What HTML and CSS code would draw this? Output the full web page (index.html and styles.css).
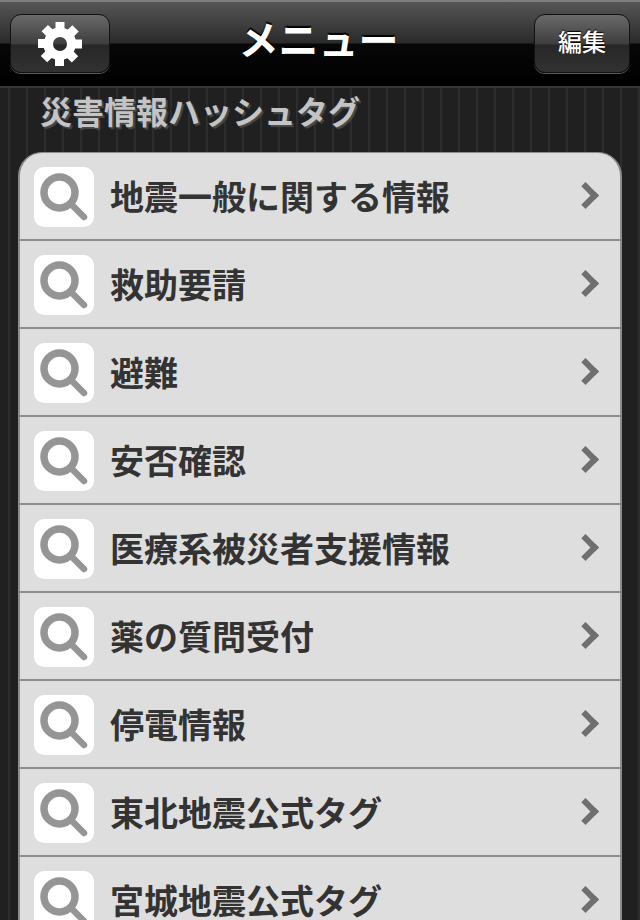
FILE: index.html
```html
<!DOCTYPE html>
<html lang="ja">

<head>
  <meta charset="utf-8">
  <title>メニュー</title>
  <link rel="stylesheet" href="styles.css">
</head>

<body>
  <header class="navbar">
    <button type="button" class="navBtn gearBtn">
      <svg width="46" height="46" viewBox="0 0 46 46">
        <path class="gear" fill-rule="evenodd" d="M18.500 1h9v6.200l3.400 1.400 4.400-4.400 6.400 6.400-4.400 4.400 1.400 3.400H45v9h-6.800l-1.400 3.400 4.400 4.400-6.400 6.400-4.400-4.400-3.400 1.400V45h-9v-6.700l-3.400-1.400-4.400 4.400-6.400-6.400 4.400-4.400-1.400-3.400H1v-9h6.600l1.400-3.400-4.400-4.400 6.400-6.400 4.400 4.400 3.100-1.400z M23 16a7 7 0 1 0 0 14a7 7 0 1 0 0-14z"/>
      </svg>
    </button>
    <h1 class="navTitle">メニュー</h1>
    <button type="button" class="navBtn editBtn"><span class="editLabel">編集</span></button>
  </header>

  <main class="content">
    <h2 class="sectionTitle">災害情報ハッシュタグ</h2>
    <ul class="menuList">
      <li class="menuRow"><span class="searchBox"><svg width="60" height="60" viewBox="0 0 60 60"><use href="#lens"/></svg></span><span class="rowText">地震一般に関する情報</span><span class="chev"></span></li>
      <li class="menuRow"><span class="searchBox"><svg width="60" height="60" viewBox="0 0 60 60"><use href="#lens"/></svg></span><span class="rowText">救助要請</span><span class="chev"></span></li>
      <li class="menuRow"><span class="searchBox"><svg width="60" height="60" viewBox="0 0 60 60"><use href="#lens"/></svg></span><span class="rowText">避難</span><span class="chev"></span></li>
      <li class="menuRow"><span class="searchBox"><svg width="60" height="60" viewBox="0 0 60 60"><use href="#lens"/></svg></span><span class="rowText">安否確認</span><span class="chev"></span></li>
      <li class="menuRow"><span class="searchBox"><svg width="60" height="60" viewBox="0 0 60 60"><use href="#lens"/></svg></span><span class="rowText">医療系被災者支援情報</span><span class="chev"></span></li>
      <li class="menuRow"><span class="searchBox"><svg width="60" height="60" viewBox="0 0 60 60"><use href="#lens"/></svg></span><span class="rowText">薬の質問受付</span><span class="chev"></span></li>
      <li class="menuRow"><span class="searchBox"><svg width="60" height="60" viewBox="0 0 60 60"><use href="#lens"/></svg></span><span class="rowText">停電情報</span><span class="chev"></span></li>
      <li class="menuRow"><span class="searchBox"><svg width="60" height="60" viewBox="0 0 60 60"><use href="#lens"/></svg></span><span class="rowText">東北地震公式タグ</span><span class="chev"></span></li>
      <li class="menuRow"><span class="searchBox"><svg width="60" height="60" viewBox="0 0 60 60"><use href="#lens"/></svg></span><span class="rowText">宮城地震公式タグ</span><span class="chev"></span></li>
    </ul>
  </main>

  <svg width="0" height="0" class="defs">
    <defs>
      <g id="lens">
        <circle cx="25.500" cy="25.500" r="15.500" fill="none" stroke="#959595" stroke-width="7.500"/>
        <line x1="37" y1="37" x2="50" y2="50" stroke="#959595" stroke-width="6.500" stroke-linecap="round"/>
      </g>
    </defs>
  </svg>
</body>

</html>
```

FILE: styles.css
```css
html, body {
  margin: 0;
  height: 920px;
  overflow: hidden;
}

body {
  font-family: "Noto Sans CJK JP", "Liberation Sans", sans-serif;
  background-color: #202020;
  background-image: repeating-linear-gradient(90deg, #202020 0, #202020 8px, #2d2d2d 8px, #2d2d2d 10px, #202020 10px, #202020 18px);
}

.navbar {
  height: 88px;
  box-sizing: border-box;
  padding: 12px 10px 13px;
  display: flex;
  align-items: stretch;
  justify-content: space-between;
  border-top: 2px solid #7f7f7f;
  border-bottom: 2px solid #363636;
  background: linear-gradient(#565656 0, #2a2a2a 41px, #070707 42px, #000 100%);
}

.navBtn {
  margin: 0;
  padding: 0;
  border: 1px solid #111;
  border-radius: 11px;
  color: #fff;
  font-family: inherit;
  box-shadow: 0 1px 0 #5a5a5a;
  background: linear-gradient(#6a6a6a 0, #3d3d3d 29px, #272727 30px, #323232 100%);
  display: flex;
  align-items: center;
  justify-content: center;
}

.gearBtn {
  width: 100px;
}

.editBtn {
  width: 96px;
  font-size: 24px;
  font-weight: 500;
  text-shadow: 0 -1px 1px #000;
}

.editLabel {
  margin-bottom: 7px;
}

.gear {
  fill: #fff;
}

.navTitle {
  margin: 0 7px 0 0;
  color: #fff;
  font-size: 40px;
  font-weight: 700;
  line-height: 48px;
  text-shadow: 0 -2px 1px #000;
}

.content {
  padding: 0 18px;
}

.sectionTitle {
  margin: 0;
  padding-left: 22px;
  height: 64px;
  color: #c4c4c4;
  font-size: 32px;
  font-weight: 700;
  line-height: 45px;
  text-shadow: 2px 2px 1px #4a4a4a;
}

.menuList {
  margin: 0;
  padding: 0;
  list-style: none;
  background: #dedede;
  border: 2px solid #8c8c8c;
  border-top-width: 1px;
  border-radius: 24px;
  overflow: hidden;
}

.menuRow {
  height: 84px;
  padding: 2px 0 0 14px;
  border-bottom: 2px solid #8c8c8c;
  display: flex;
  align-items: center;
}

.searchBox {
  width: 60px;
  height: 60px;
  flex: none;
  background: #fff;
  border-radius: 10px;
}

.rowText {
  flex: 1;
  margin: 0 0 4px 16px;
  color: #333;
  font-size: 34px;
  font-weight: 700;
  white-space: nowrap;
}

.chev {
  width: 13px;
  height: 13px;
  flex: none;
  margin: 0 25px 4px 0;
  border-top: 6px solid #6f6f6f;
  border-right: 6px solid #6f6f6f;
  transform: rotate(45deg);
}

.defs {
  display: block;
}
```
